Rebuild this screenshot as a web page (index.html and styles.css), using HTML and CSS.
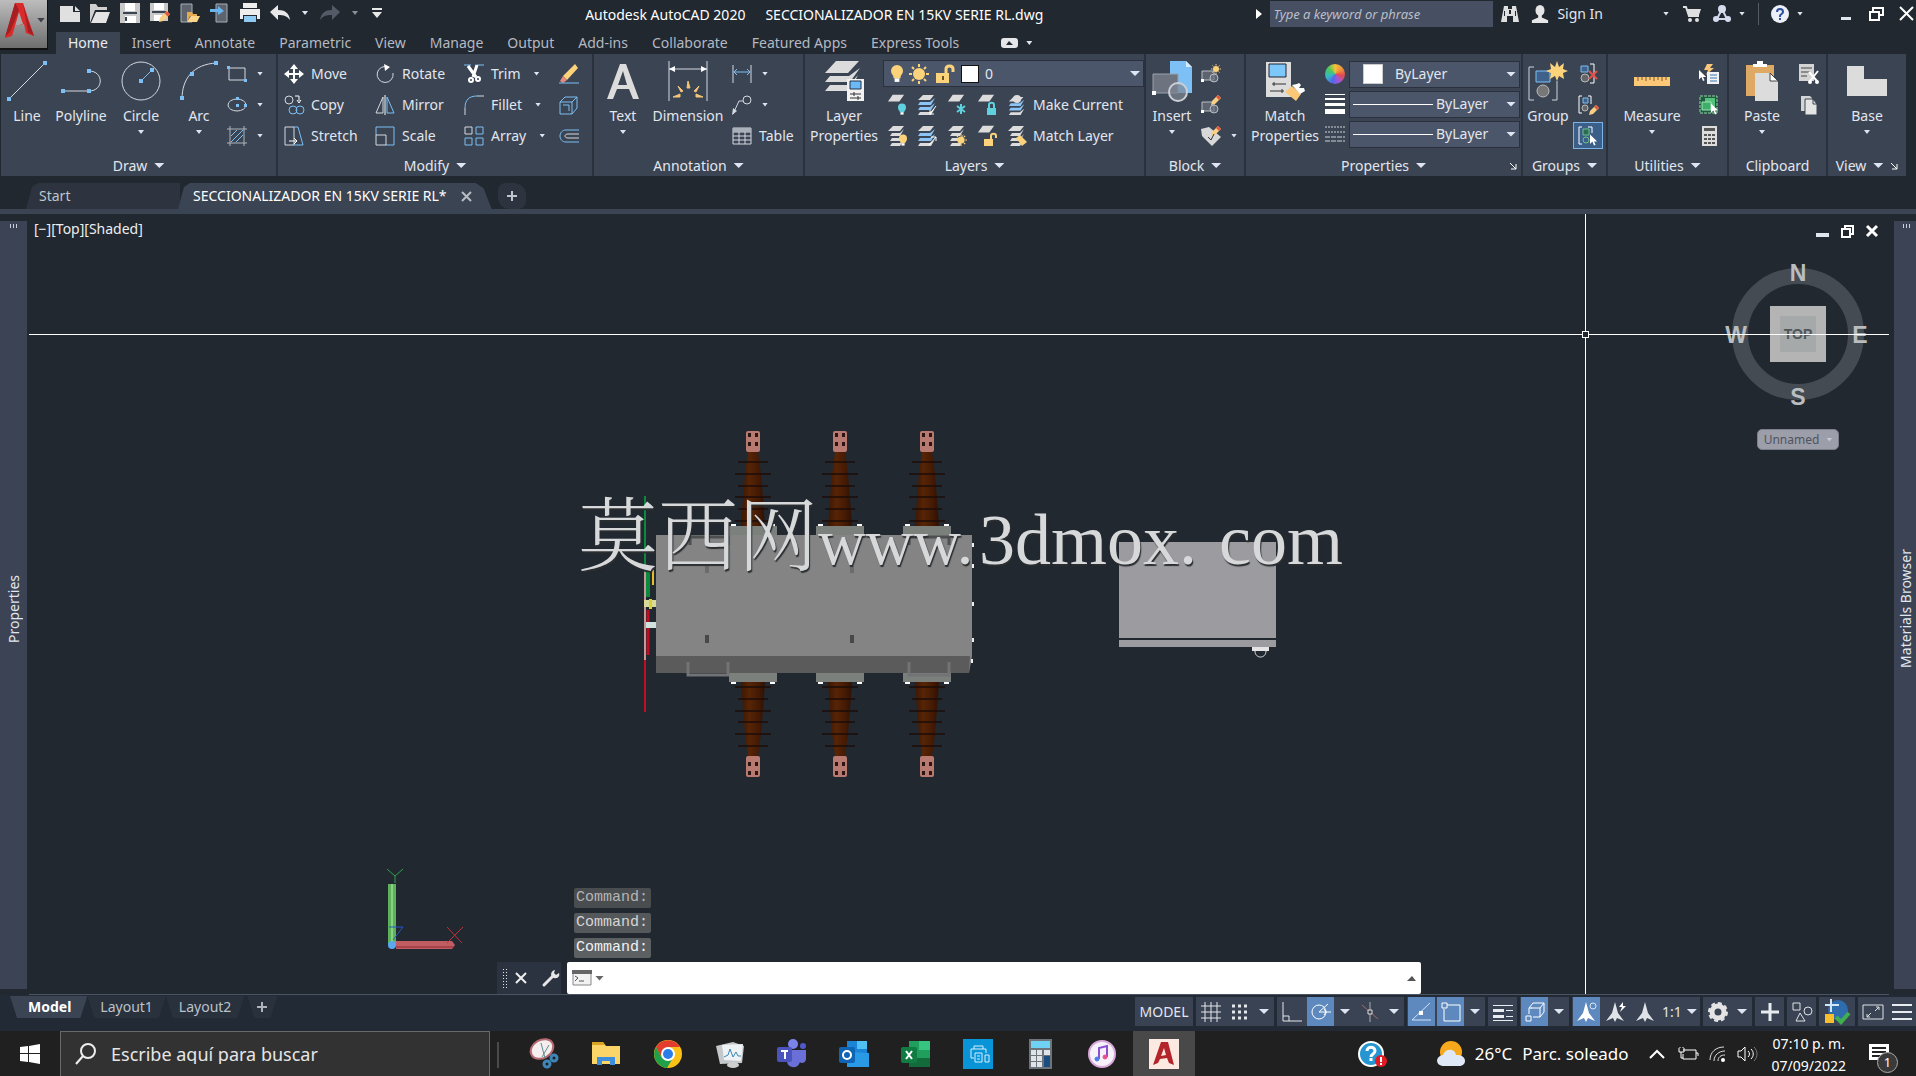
FILE: index.html
```html
<!DOCTYPE html>
<html lang="en">
<head>
<meta charset="utf-8">
<title>Autodesk AutoCAD 2020 - SECCIONALIZADOR EN 15KV SERIE RL.dwg</title>
<link rel="stylesheet" href="styles.css">
</head>
<body>
<svg class="defs" aria-hidden="true">
  <symbol id="sheet" viewBox="0 0 20 20"><path d="M6 3h12l-5 7H1z" fill="#dcdcdc"/></symbol>
  <symbol id="stack" viewBox="0 0 20 20"><path d="M6 0h11l-4 5H1zM3 10l2-3h8l4-4-4 7zM3 15l2-3h8l4-4-4 7zM3 20l2-3h8l4-4-4 7z" fill="#dcdcdc"/></symbol>
  <symbol id="bstack" viewBox="0 0 20 20"><path d="M6 0h11l-4 5H1z" fill="#dcdcdc"/><path d="M1 10l2-3h10l5-4-4 7zM1 15l2-3h10l5-4-4 7z" fill="#8cc4f5"/><path d="M1 20l2-3h10l5-4-4 7z" fill="#dcdcdc"/></symbol>
  <symbol id="bulb" viewBox="0 0 10 14"><circle cx="5" cy="5" r="5"/><path d="M2 8h6v3H2z"/><path d="M3 11h4v3H3z" fill="#fff"/></symbol>
  <symbol id="sun" viewBox="0 0 20 20"><circle cx="10" cy="10" r="6"/><path d="M10 0v3M10 17v3M0 10h3M17 10h3M3 3l2 2M15 15l2 2M17 3l-2 2M5 15l-2 2" stroke="#fcd27a" stroke-width="2"/></symbol>
  <symbol id="cursor" viewBox="0 0 10 14"><path d="M0 0v12l3-3 2 5 2-1-2-4h4z" fill="#fff"/></symbol>
  <symbol id="block" viewBox="0 0 20 20"><path d="M1 7h12v9H1z" fill="#5d6470" stroke="#b9bec6"/><circle cx="13" cy="14" r="4" fill="#6b7280" fill-opacity=".7" stroke="#b9bec6"/><path d="M0 15h3v3H0z" fill="#fff"/></symbol>
  <symbol id="pencil" viewBox="0 0 10 10"><path d="M0 10l1-4 6-6 3 3-6 6z" fill="#f7cf85"/><path d="M5 2l2-2 3 3-2 2z" fill="#e0563f"/></symbol>
  <symbol id="person" viewBox="0 0 20 20"><ellipse cx="10" cy="6" rx="5" ry="6"/><path d="M8 10h4v4l7 3v3H1v-3l7-3z"/></symbol>
</svg>

<header class="top">
  <button class="app-button" aria-label="Application menu">
    <svg width="30" height="36" viewBox="0 0 30 36"><path d="M10 1h8l11 33-8-3-2-9-9 2-3 10-7 2z" fill="#d92b2b"/><path d="M10 1l4 7-9 22-5 5zM18 1l4 15 7 18-6-4z" fill="#a41e22"/><path d="M14 10l4 12-8 2z" fill="#a9a9a9"/></svg>
    <span class="caret dark"></span>
  </button>
  <div class="titlebar">
    <div class="quick">
      <button aria-label="New"><svg class="i" viewBox="0 0 20 20"><path d="M0 3h13v6h7v10H0zM15 3l5 5h-5z" fill="#e0e0e0"/></svg></button>
      <button aria-label="Open"><svg class="i" viewBox="0 0 20 20"><path d="M0 20V1h6l2 3h9v3H5z" fill="#cfcfcf"/><path d="M6 9h14l-4 11H1z" fill="#e4e4e4"/></svg></button>
      <button aria-label="Save"><svg class="i" viewBox="0 0 20 20"><path d="M0 0h20v20H0z" fill="#c9c9c9"/><path d="M5 0h10v8H5zM5 13h11v7H5z" fill="#fff"/><path d="M3 9h14v2H3zM5 14h2v4H5z" fill="#3b4453"/></svg></button>
      <button aria-label="Save as"><svg class="i" viewBox="0 0 20 20"><path d="M0 0h18v18H0z" fill="#c9c9c9"/><path d="M4 0h10v7H4zM4 12h8v6H4z" fill="#fff"/><path d="M2 8h14v2H2z" fill="#3b4453"/><use href="#pencil" x="9" y="8" width="11" height="11"/></svg></button>
      <button aria-label="Open from web"><svg class="i" viewBox="0 0 20 20"><path d="M1 1h11v18H1z" fill="#5d646e" stroke="#a8adb5"/><path d="M7 19V9h5l1 2h4v2H10z" fill="#e5a94e"/><path d="M11 13h9l-3 6H7z" fill="#fcd58a"/></svg></button>
      <button aria-label="Save to web"><svg class="i" viewBox="0 0 20 20"><path d="M6 1h11v18H6z" fill="#5d646e" stroke="#a8adb5"/><path d="M0 6h8V3l6 5-6 4V9H0z" fill="#6bb5ef"/></svg></button>
      <button aria-label="Plot"><svg class="i" viewBox="0 0 20 20"><path d="M3 0h14v5H3zM0 6h20v10h-3v-4H3v4H0z" fill="#eee"/><path d="M4 13h12v6H4z" fill="#8fcaf2"/></svg></button>
      <button aria-label="Undo"><svg class="i" viewBox="0 0 20 20"><path d="M0 9l8-7v5c7 0 11 3 12 10-3-4-6-5-12-5v5z" fill="#e8e8e8"/></svg></button>
      <span class="caret sm"></span>
      <button aria-label="Redo"><svg class="i" viewBox="0 0 20 20"><path d="M20 9l-8-7v5C5 7 1 10 0 17c3-4 6-5 12-5v5z" fill="#545b66"/></svg></button>
      <span class="caret sm dim"></span>
      <button aria-label="Customize toolbar" class="qat-more"><svg width="10" height="10" viewBox="0 0 10 10"><path d="M0 0h10v2H0zM0 4h10l-5 6z" fill="#e8e8e8"/></svg></button>
    </div>
    <h1 class="title"><span>Autodesk AutoCAD 2020</span><span>SECCIONALIZADOR EN 15KV SERIE RL.dwg</span></h1>
    <div class="account">
      <svg width="6" height="10" viewBox="0 0 6 10"><path d="M0 0l6 5-6 5z" fill="#fff"/></svg>
      <input class="keyword" type="text" aria-label="Search" placeholder="Type a keyword or phrase">
      <button aria-label="Find"><svg class="i18" viewBox="0 0 18 18"><path d="M3 1h4v3h4V1h4l3 16h-6v-6H6v6H0z" fill="#e0e0e0"/><path d="M8 5h2v4H8zM3 6h1v5H3zM14 6h1v5h-1z" fill="#212830"/></svg></button>
      <button class="signin"><svg class="i18" fill="#e6e6e6"><use href="#person"/></svg>Sign In</button>
      <span class="caret sm signin-caret"></span>
      <button aria-label="Store"><svg class="i18" viewBox="0 0 18 18"><path d="M0 2h3l3 9h10" fill="none" stroke="#e0e0e0" stroke-width="2"/><path d="M4 4h14l-2 6H6z" fill="#e0e0e0"/><circle cx="7" cy="15" r="2" fill="#e0e0e0"/><circle cx="14" cy="15" r="2" fill="#e0e0e0"/></svg></button>
      <button class="apps" aria-label="Apps"><svg class="i18" viewBox="0 0 18 18"><path d="M9 4L4 14h10z" fill="none" stroke="#cfd6ea" stroke-width="2"/><circle cx="9" cy="4" r="4" fill="#d6dcee"/><circle cx="3" cy="14" r="3" fill="#d6dcee"/><circle cx="15" cy="14" r="3" fill="#d6dcee"/></svg><span class="caret sm"></span></button>
      <i class="divider"></i>
      <button class="apps" aria-label="Help"><svg class="i18" viewBox="0 0 18 18"><circle cx="9" cy="9" r="9" fill="#eceff5"/><path d="M6 7c0-4 6-4 6 0 0 2-3 2-3 4v1m0 1v2" fill="none" stroke="#2a4f9c" stroke-width="2"/></svg><span class="caret sm"></span></button>
      <div class="window">
        <button aria-label="Minimize"><svg class="i15" viewBox="0 0 15 15"><path d="M2 11h10v3H2z" fill="#dfe6ee"/></svg></button>
        <button aria-label="Restore"><svg class="i15" viewBox="0 0 15 15"><path d="M4 6V2h10v7h-4M1 6h9v8H1z" fill="none" stroke="#fff" stroke-width="2"/></svg></button>
        <button aria-label="Close"><svg class="i15" viewBox="0 0 15 15"><path d="M1 1l13 13M14 1L1 14" stroke="#fff" stroke-width="2"/></svg></button>
      </div>
    </div>
  </div>
  <nav class="tabs">
    <button class="on">Home</button><button>Insert</button><button>Annotate</button><button>Parametric</button><button>View</button><button>Manage</button><button>Output</button><button>Add-ins</button><button>Collaborate</button><button>Featured Apps</button><button>Express Tools</button>
    <button class="collapse" aria-label="Minimize ribbon"><svg width="17" height="10" viewBox="0 0 17 10"><rect width="17" height="10" rx="3" fill="#e4e6ea"/><path d="M5 7h7L8 3z" fill="#212830"/></svg><span class="caret sm"></span></button>
  </nav>
</header>

<div class="ribbon">
  <section class="panel draw">
    <div class="body">
      <button class="big w48"><svg class="i40" viewBox="0 0 40 40"><path d="M2 38L38 2" stroke="#d5d9e0"/><path d="M0 36h4v4H0zM36 0h4v4h-4z" fill="#7cc0f5"/></svg>Line</button>
      <button class="big w60"><svg class="i40" viewBox="0 0 40 40"><path d="M2 30h26c15 0 15-20 0-20" fill="none" stroke="#d5d9e0"/><path d="M0 28h4v4H0zM26 28h4v4h-4zM26 8h4v4h-4z" fill="#7cc0f5"/></svg>Polyline</button>
      <button class="big w60"><svg class="i40" viewBox="0 0 40 40"><circle cx="20" cy="20" r="19" fill="none" stroke="#d5d9e0"/><path d="M20 20L31 9" stroke="#7cc0f5"/><path d="M18 18h4v4h-4zM29 7h4v4h-4z" fill="#7cc0f5"/></svg>Circle<span class="caret sm"></span></button>
      <button class="big w56"><svg class="i40" viewBox="0 0 40 40"><path d="M3 38C3 18 14 3 38 2" fill="none" stroke="#d5d9e0"/><path d="M1 35h4v4H1zM11 11h4v4h-4zM35 0h4v4h-4z" fill="#7cc0f5"/></svg>Arc<span class="caret sm"></span></button>
      <div class="rows">
        <button class="small split"><svg class="i" viewBox="0 0 20 20"><path d="M2 4h16v12H2z" fill="none" stroke="#d5d9e0"/><path d="M0 2h3v3H0zM17 15h3v3h-3z" fill="#7cc0f5"/></svg><span class="caret sm"></span></button>
        <button class="small split"><svg class="i" viewBox="0 0 20 20"><ellipse cx="10" cy="10" rx="9" ry="6" fill="none" stroke="#d5d9e0"/><path d="M9 2h3v3H9zM9 9h3v3H9zM17 9h3v3h-3z" fill="#7cc0f5"/></svg><span class="caret sm"></span></button>
        <button class="small split"><svg class="i" viewBox="0 0 20 20"><path d="M0 3h20M0 17h20M3 0v20M17 0v20" stroke="#aeb4be"/><path d="M4 10l6-6M4 16L16 4M9 16l7-7" stroke="#7cc0f5"/></svg><span class="caret sm"></span></button>
      </div>
    </div>
    <button class="name">Draw<span class="caret"></span></button>
  </section>

  <section class="panel modify">
    <div class="body">
      <div class="rows c1">
        <button class="small"><svg class="i" viewBox="0 0 20 20"><path d="M10 0l4 5h-3v4h4V6l5 4-5 4v-3h-4v4h3l-4 5-4-5h3v-4H5v3l-5-4 5-4v3h4V5H6z" fill="#fff"/></svg>Move</button>
        <button class="small"><svg class="i" viewBox="0 0 20 20"><circle cx="5" cy="5" r="4" fill="none" stroke="#d5d9e0"/><path d="M11 1h4v5m-2-1l2 3 2-3" fill="none" stroke="#fff"/><circle cx="9" cy="15" r="4" fill="none" stroke="#7cc0f5"/><circle cx="16" cy="15" r="4" fill="none" stroke="#7cc0f5"/></svg>Copy</button>
        <button class="small"><svg class="i" viewBox="0 0 20 20"><path d="M1 1h9v18H1z" fill="none" stroke="#d5d9e0"/><path d="M10 1h4l5 18h-9" fill="none" stroke="#7cc0f5"/><path d="M5 15h8m-3-3l3 3-3 3" fill="none" stroke="#fff"/></svg>Stretch</button>
      </div>
      <div class="rows c2">
        <button class="small"><svg class="i" viewBox="0 0 20 20"><path d="M13 3a8 8 0 1 0 5 6" fill="none" stroke="#d5d9e0"/><path d="M9 0l6 3-5 4z" fill="#fff"/></svg>Rotate</button>
        <button class="small"><svg class="i" viewBox="0 0 20 20"><path d="M8 2v16H1z" fill="none" stroke="#d5d9e0"/><path d="M12 2v16h7z" fill="none" stroke="#7cc0f5"/><path d="M10 0v20" stroke="#fff"/></svg>Mirror</button>
        <button class="small"><svg class="i" viewBox="0 0 20 20"><path d="M1 9V1h18v18h-8" fill="none" stroke="#7cc0f5"/><path d="M1 9h10v10H1z" fill="none" stroke="#d5d9e0"/></svg>Scale</button>
      </div>
      <div class="rows c3">
        <button class="small"><svg class="i" viewBox="0 0 20 20"><path d="M0 1h7M13 1h7" stroke="#7cc0f5"/><path d="M4 2l8 11M13 1L9 13" stroke="#fff" stroke-width="3"/><circle cx="7" cy="16" r="2" fill="none" stroke="#fff" stroke-width="2"/><circle cx="14" cy="15" r="2" fill="none" stroke="#fff" stroke-width="2"/></svg>Trim<span class="caret sm"></span></button>
        <button class="small"><svg class="i" viewBox="0 0 20 20"><path d="M1 20V13" stroke="#d5d9e0"/><path d="M1 13C1 5 5 1 13 1" fill="none" stroke="#7cc0f5"/><path d="M13 1h7" stroke="#d5d9e0"/></svg>Fillet<span class="caret sm"></span></button>
        <button class="small"><svg class="i" viewBox="0 0 20 20"><path d="M1 1h7v7H1z" fill="none" stroke="#d5d9e0"/><path d="M12 1h7v7h-7zM1 12h7v7H1zM12 12h7v7h-7z" fill="none" stroke="#7cc0f5"/></svg>Array<span class="caret sm"></span></button>
      </div>
      <div class="rows">
        <button class="small" aria-label="Erase"><svg class="i" viewBox="0 0 20 20"><path d="M4 12L16 0l3 4L8 16z" fill="#fcd27a"/><path d="M4 12l4 4-4 3-3-2z" fill="#e58a7e"/><path d="M0 19h20" stroke="#7cc0f5"/></svg></button>
        <button class="small" aria-label="Explode"><svg class="i" viewBox="0 0 20 20"><path d="M1 7h12v12H1zM1 7l5-5h12l-5 5M18 2v11l-5 6M4 10h6v6" fill="none" stroke="#7cc0f5"/></svg></button>
        <button class="small" aria-label="Offset"><svg class="i" viewBox="0 0 20 20"><path d="M20 4H7C-1 4-1 16 7 16h13" fill="none" stroke="#7cc0f5"/><path d="M20 8H9c-4 0-4 4 0 4h11" fill="none" stroke="#d5d9e0"/></svg></button>
      </div>
    </div>
    <button class="name">Modify<span class="caret"></span></button>
  </section>

  <section class="panel annotation">
    <div class="body">
      <button class="big w56"><svg class="i40" viewBox="0 0 40 40"><path d="M4 38L17 3h6l13 35h-6l-4-10H14l-4 10zM15 24h9L20 10z" fill="#dcdcdc"/></svg>Text<span class="caret sm"></span></button>
      <button class="big w74"><svg class="i40" viewBox="0 0 40 40"><path d="M1 0v40M39 0v40M1 8h38" stroke="#d5d9e0"/><path d="M1 8l6-3v6zM39 8l-6-3v6z" fill="#fff"/><path d="M19 27l1-7 2 7zM10 25l5 5-2 1zM31 25l-5 5 2 1zM5 36l7-3v3zM35 36l-7-3v3z" fill="#f3c476" stroke="#f3c476"/></svg>Dimension</button>
      <div class="rows">
        <button class="small split"><svg class="i" viewBox="0 0 20 20"><path d="M1 1v18M19 1v18" stroke="#d5d9e0"/><path d="M2 8h16M5 5L2 8l3 3M15 5l3 3-3 3" fill="none" stroke="#7cc0f5"/></svg><span class="caret sm"></span></button>
        <button class="small split"><svg class="i" viewBox="0 0 20 20"><path d="M1 19L7 6h4" fill="none" stroke="#d5d9e0"/><circle cx="15" cy="5" r="4" fill="none" stroke="#d5d9e0"/><path d="M0 20l1-7 4 3z" fill="#d5d9e0"/></svg><span class="caret sm"></span></button>
        <button class="small"><svg class="i" viewBox="0 0 20 20"><path d="M1 2h18v16H1zM1 10h18M1 14h18M7 6v12M13 6v12M1 6h18" fill="none" stroke="#d5d9e0"/><path d="M1 2h18v4H1z" fill="#aab0b9"/></svg>Table</button>
      </div>
    </div>
    <button class="name">Annotation<span class="caret"></span></button>
  </section>

  <section class="panel layers">
    <div class="body">
      <button class="big w74"><svg class="i40" viewBox="0 0 40 40"><path d="M12 0h23L24 12H1zM1 21l5-6h19L36 7 26 21zM1 30l5-6h19l9-10-8 16z" fill="#dcdcdc"/><path d="M23 18h17v22H23z" fill="#f2f2f2"/><path d="M26 20h11v8H26z" fill="#6bb9f7" stroke="#234"/><path d="M26 33h11M26 37h11M30 31v4M34 35v4" stroke="#333"/></svg>Layer<br>Properties</button>
      <div class="layer-tools">
        <div class="combo layer-combo">
          <svg class="bulb" fill="#fcd27a"><use href="#bulb"/></svg>
          <svg class="i" fill="#fcd27a"><use href="#sun"/></svg>
          <svg class="i" viewBox="0 0 20 20"><path d="M1 9h13v10H1z" fill="#fcd27a"/><path d="M11 9V5c0-4 7-4 7 0v3" fill="none" stroke="#fcd27a" stroke-width="3"/><path d="M7 12h2v4H7z" fill="#6a5320"/></svg>
          <span class="swatch"></span>
          <select aria-label="Layer"><option>0</option></select>
          <span class="caret"></span>
        </div>
        <div class="layer-row">
          <button aria-label="Off"><svg class="i" viewBox="0 0 20 20"><use href="#sheet" width="19" height="19" y="-3"/><use href="#bulb" x="11" y="8" width="8" height="12" fill="#5fd0de"/></svg></button>
          <button aria-label="Isolate"><svg class="i" viewBox="0 0 20 20"><use href="#bstack"/><path d="M19 11l-6 8m0-4v4h4" stroke="#fff" fill="none"/></svg></button>
          <button aria-label="Freeze"><svg class="i" viewBox="0 0 20 20"><use href="#sheet" width="19" height="19" y="-3"/><path d="M14 9v10M10 11l8 6M18 11l-8 6" stroke="#5fd0de" stroke-width="2"/></svg></button>
          <button aria-label="Lock"><svg class="i" viewBox="0 0 20 20"><use href="#sheet" width="19" height="19" y="-3"/><path d="M10 13h9v7h-9z" fill="#5fd0de"/><path d="M12 13v-3c0-3 5-3 5 0v3" fill="none" stroke="#5fd0de" stroke-width="2"/></svg></button>
          <button class="wide"><svg class="i" viewBox="0 0 20 20"><use href="#bstack" y="2" height="18"/><circle cx="10" cy="4" r="4" fill="#dcdcdc"/></svg>Make Current</button>
        </div>
        <div class="layer-row">
          <button aria-label="Turn all on"><svg class="i" viewBox="0 0 20 20"><use href="#stack"/><use href="#bulb" x="12" y="8" width="8" height="12" fill="#fcd27a"/></svg></button>
          <button aria-label="Unisolate"><svg class="i" viewBox="0 0 20 20"><use href="#bstack"/><path d="M12 19l7-8m-5 0h5v4" stroke="#fff" fill="none"/></svg></button>
          <button aria-label="Thaw all"><svg class="i" viewBox="0 0 20 20"><use href="#stack"/><use href="#sun" x="8" y="8" width="12" height="12" fill="#fcd27a"/></svg></button>
          <button aria-label="Unlock"><svg class="i" viewBox="0 0 20 20"><use href="#sheet" width="19" height="19" y="-3"/><path d="M7 13h9v7H7z" fill="#fcd27a"/><path d="M14 13v-3c0-3 5-3 5 0v2" fill="none" stroke="#fcd27a" stroke-width="2"/></svg></button>
          <button class="wide"><svg class="i" viewBox="0 0 20 20"><use href="#stack"/><path d="M9 12l4-3 7 7-5 4z" fill="#fcd27a"/></svg>Match Layer</button>
        </div>
      </div>
    </div>
    <button class="name">Layers<span class="caret"></span></button>
  </section>

  <section class="panel block">
    <div class="body">
      <button class="big w48"><svg class="i40" viewBox="0 0 40 40"><path d="M18 0h16l6 6v26H18z" fill="#7cc0f5"/><path d="M34 0v6h6z" fill="#d7ecfb"/><path d="M1 13h25v19H1z" fill="#6d7480" stroke="#9aa1ab"/><circle cx="26" cy="31" r="9" fill="#7f8894" fill-opacity=".7" stroke="#ccd0d6" stroke-width="2"/><path d="M0 30h4v4H0z" fill="#fff"/></svg>Insert<span class="caret sm"></span></button>
      <div class="rows">
        <button class="small" aria-label="Create block"><svg class="i" viewBox="0 0 20 20"><use href="#block"/><use href="#sun" x="10" y="0" width="10" height="10" fill="#fcd27a"/></svg></button>
        <button class="small" aria-label="Edit block"><svg class="i" viewBox="0 0 20 20"><use href="#block"/><use href="#pencil" x="10" y="0" width="10" height="10"/></svg></button>
        <button class="small split" aria-label="Edit attributes"><svg class="i" viewBox="0 0 20 20"><path d="M0 3l8-2 12 10-9 9L1 10z" fill="#d8d8d8"/><use href="#pencil" x="10" y="0" width="10" height="10"/><path d="M7 11l3 3 3-6" stroke="#333" fill="none"/></svg><span class="caret sm"></span></button>
      </div>
    </div>
    <button class="name">Block<span class="caret"></span></button>
  </section>

  <section class="panel properties">
    <div class="body">
      <button class="big w74"><svg class="i40" viewBox="0 0 40 40"><path d="M1 1h25v35H1z" fill="#dcdcdc"/><path d="M4 3h17v13H4z" fill="#7cc8fb" stroke="#223"/><path d="M7 23h14M5 30h14M9 21v4M17 28v4" stroke="#333" stroke-width="1"/><path d="M20 31l7-6 9 8-5 7z" fill="#fcc878"/><path d="M27 24l5-1 2-1 2 2-2 3 5 0 1 3-5 3z" fill="#fff"/></svg>Match<br>Properties</button>
      <div class="prop-tools">
        <span class="wheel"></span>
        <div class="combo"><span class="swatch big-swatch"></span><select aria-label="Object color"><option>ByLayer</option></select><span class="caret"></span></div>
        <svg class="i" viewBox="0 0 20 20"><path d="M0 0h20v1H0zM0 4h20v2H0zM0 9h20v3H0zM0 15h20v5H0z" fill="#fff"/></svg>
        <div class="combo"><i class="rule"></i><select aria-label="Lineweight"><option>ByLayer</option></select><span class="caret"></span></div>
        <svg class="i" viewBox="0 0 20 20"><path d="M0 3h20M0 8h20" stroke="#cfd3da" stroke-dasharray="2 1"/><path d="M0 13h20M0 17h20" stroke="#cfd3da" stroke-dasharray="5 1"/></svg>
        <div class="combo"><i class="rule"></i><select aria-label="Linetype"><option>ByLayer</option></select><span class="caret"></span></div>
      </div>
    </div>
    <div class="name">Properties<span class="caret"></span><svg class="launch" viewBox="0 0 8 8"><path d="M1 1l6 6M7 2v5H2" fill="none" stroke="#fff"/></svg></div>
  </section>

  <section class="panel groups">
    <div class="body">
      <button class="big w48"><svg class="i40" viewBox="0 0 40 40"><path d="M6 6H1v33h5M24 39h5V20" fill="none" stroke="#cfd3da" stroke-width="1"/><path d="M8 10h14v11H8z" fill="#3f628a" stroke="#7cc0f5"/><circle cx="15" cy="30" r="6" fill="#777" stroke="#bbb"/><path d="M29 0l2 6 5-4-1 6 5 2-5 2 1 6-5-3-2 5-2-5-5 3 1-6-5-2 5-2-1-6 5 4z" fill="#fcd27a"/></svg>Group</button>
      <div class="rows">
        <button class="small tile" aria-label="Ungroup"><svg class="i" viewBox="0 0 20 20"><path d="M3 2h7v6H3z" fill="#3f628a" stroke="#7cc0f5"/><circle cx="7" cy="14" r="4" fill="#666" stroke="#bbb"/><path d="M12 0h4v19h-4" fill="none" stroke="#fff"/><path d="M11 7l8 8M19 7l-8 8" stroke="#e2504a" stroke-width="2"/></svg></button>
        <button class="small tile" aria-label="Group edit"><svg class="i" viewBox="0 0 20 20"><path d="M4 1H1v17h3M10 1h3v8" fill="none" stroke="#fff"/><path d="M5 3h5v5H5z" fill="#3f628a" stroke="#7cc0f5"/><circle cx="7" cy="13" r="3" fill="#666" stroke="#bbb"/><use href="#pencil" x="11" y="10" width="10" height="10"/></svg></button>
        <button class="small tile active" aria-label="Group selection"><svg class="i" viewBox="0 0 20 20"><path d="M4 1H1v17h3M10 1h4v6" fill="none" stroke="#fff"/><path d="M5 3h6v6H5z" fill="#2f6a55" stroke="#6fc08a"/><circle cx="8" cy="14" r="3" fill="none" stroke="#6fc08a"/><use href="#cursor" x="12" y="8" width="8" height="12"/></svg></button>
      </div>
    </div>
    <button class="name">Groups<span class="caret"></span></button>
  </section>

  <section class="panel utilities">
    <div class="body">
      <button class="big w74"><svg class="i40" viewBox="0 0 40 40"><path d="M2 16h36v9H2z" fill="#fcc878"/><path d="M6 16v4M10 16v3M14 16v4M18 16v3M22 16v4M26 16v3M30 16v4M34 16v3" stroke="#7d5a20"/></svg>Measure<span class="caret sm"></span></button>
      <div class="rows">
        <button class="small" aria-label="Quick select"><svg class="i" viewBox="0 0 20 20"><path d="M8 0l-3 6h4l-2 5 8-7h-4l3-4z" fill="#fcc878"/><path d="M8 8h12v12H8z" fill="#f2f2f2"/><path d="M11 11h7M11 14h7M11 17h7" stroke="#3b78b8"/><use href="#cursor" x="0" y="5" width="8" height="13"/></svg></button>
        <button class="small" aria-label="Select all"><svg class="i" viewBox="0 0 20 20"><path d="M1 1h17v17H1z" fill="#21583f" stroke="#8fd6a4" stroke-dasharray="3 1"/><path d="M6 3h10v9H6z" fill="#53c27a"/><path d="M3 7h9v8H3z" fill="#3fae68" stroke="#9ce6b4"/><use href="#cursor" x="12" y="8" width="8" height="12"/></svg></button>
        <button class="small" aria-label="Calculator"><svg class="i" viewBox="0 0 20 20"><path d="M3 0h15v20H3z" fill="#dcdcdc"/><path d="M5 2h11v3H5z" fill="#555"/><path d="M5 8h3v2H5zM9 8h3v2H9zM13 8h3v2h-3zM5 12h3v2H5zM9 12h3v2H9zM13 12h3v2h-3zM5 16h3v2H5zM9 16h3v2H9zM13 16h3v2h-3z" fill="#555"/></svg></button>
      </div>
    </div>
    <button class="name">Utilities<span class="caret"></span></button>
  </section>

  <section class="panel clipboard">
    <div class="body">
      <button class="big w56"><svg class="i40" viewBox="0 0 40 40"><path d="M4 4h28v31H4z" fill="#dea964"/><path d="M11 3h4V0h6v3h4v3H11z" fill="#fff"/><path d="M13 12h15l8 8v20H13z" fill="#dcdcdc"/><path d="M28 12v8h8z" fill="#fff" stroke="#444"/></svg>Paste<span class="caret sm"></span></button>
      <div class="rows">
        <button class="small" aria-label="Cut"><svg class="i" viewBox="0 0 20 20"><path d="M0 0h15v17H0z" fill="#d4d4d4"/><path d="M2 4h11M2 8h9M2 12h6" stroke="#444"/><path d="M10 8l8 9M19 7l-8 10" stroke="#fff" stroke-width="2"/><circle cx="11" cy="18" r="2" fill="#fff"/><circle cx="18" cy="18" r="2" fill="#fff"/></svg></button>
        <button class="small" aria-label="Copy"><svg class="i" viewBox="0 0 20 20"><path d="M2 1h9l2 2v13H2z" fill="#d4d4d4"/><path d="M6 4h8l4 5v11H6z" fill="#e4e4e4" stroke="#3b4453"/><path d="M14 4v5h4" fill="none" stroke="#3b4453"/></svg></button>
      </div>
    </div>
    <div class="name">Clipboard</div>
  </section>

  <section class="panel view">
    <div class="body">
      <button class="big w74"><svg class="i40" viewBox="0 0 40 40"><path d="M0 5h17v13h23v17H0z" fill="#dcdcdc"/></svg>Base<span class="caret sm"></span></button>
    </div>
    <div class="name">View<span class="caret"></span><svg class="launch" viewBox="0 0 8 8"><path d="M1 1l6 6M7 2v5H2" fill="none" stroke="#fff"/></svg></div>
  </section>
</div>

<nav class="files">
  <button class="file start">Start</button>
  <button class="file current">SECCIONALIZADOR EN 15KV SERIE RL*<svg width="11" height="11" viewBox="0 0 11 11"><path d="M1 1l9 9M10 1l-9 9" stroke="#b8bcc4" stroke-width="2"/></svg></button>
  <button class="file add" aria-label="New drawing"><svg width="10" height="10" viewBox="0 0 10 10"><path d="M5 0v10M0 5h10" stroke="#c0c4cc" stroke-width="2"/></svg></button>
</nav>

<main class="work">
  <aside class="palette left"><i class="grip"></i><span>Properties</span></aside>
  <div class="canvas">
    <div class="view-label">[−][Top][Shaded]</div>
    <svg class="model" width="680" height="370" viewBox="620 420 680 370">
      <defs>
        <linearGradient id="rust"><stop offset="0" stop-color="#3c1704"/><stop offset=".35" stop-color="#572405"/><stop offset=".7" stop-color="#461b04"/><stop offset="1" stop-color="#2e1105"/></linearGradient>
        <g id="bushing">
          <path d="M-5 452H5L8 474L10 498L12 526H-12L-10 498L-8 474z" fill="url(#rust)"/>
          <path d="M-15 462H15M-18 474H18M-15 486H15M-18 497H18M-15 509H15M-18 521H18" stroke="#1c0d09" stroke-width="1.5"/>
          <rect x="-7" y="431" width="14" height="21" rx="2" fill="#b87a70"/>
          <path d="M-5 433h3v4h-3zM2 433h3v4H2zM-5 442h3v4h-3zM2 442h3v4H2z" fill="#2b1512"/>
          <path d="M-24 526h48v10h-48z" fill="#7c807d"/>
          <path d="M-22 524h5v2h-5zM17 524h5v2h-5z" fill="#fff"/>
        </g>
      </defs>
      <use href="#bushing" x="753"/><use href="#bushing" x="840"/><use href="#bushing" x="927"/>
      <g transform="matrix(1 0 0 -1 0 1208)"><use href="#bushing" x="753"/><use href="#bushing" x="840"/><use href="#bushing" x="927"/></g>
      <path d="M656 535h316v121l-3 17H656z" fill="#838483"/>
      <path d="M656 656h314l-1 17H656z" fill="#5b5b5b"/>
      <path d="M690 545v-8h38v8M909 545v-8h40v8" fill="none" stroke="#4d4f50" stroke-width="3"/>
      <path d="M688 662v13h40v-13" fill="none" stroke="#727374" stroke-width="3"/><path d="M909 662v13h40v-13" fill="none" stroke="#727374" stroke-width="3"/>
      <path d="M705 566h4v7h-4zM850 566h4v7h-4z" fill="#6b6c6b"/><path d="M705 635h4v8h-4zM850 635h4v8h-4z" fill="#474847"/>
      <path d="M972 543h2v4h-2zM972 564h2v4h-2zM972 602h2v4h-2zM972 638h2v4h-2zM971 659h2v4h-2z" fill="#eee"/>
      <path d="M645 496v76" stroke="#0b8a3e" stroke-width="2"/><path d="M645 572v88" stroke="#c49a9a" stroke-width="2"/><path d="M645 660v52" stroke="#c00d22" stroke-width="2"/>
      <path d="M648 572v25" stroke="#0b8a3e" stroke-width="4"/><path d="M648 610v45" stroke="#c00d22" stroke-width="3"/><path d="M648 570h5v15" fill="none" stroke="#e5c02c" stroke-width="2"/>
      <path d="M644 600h12v7h-12z" fill="#d9d99a"/><path d="M646 622h10v6h-10z" fill="#cfe2dd"/><path d="M649 599h3v10h-3z" fill="#d8cf3c"/>
      <path d="M1119 542h157v96h-157zM1119 640h157v7h-157z" fill="#9c9b9f"/>
      <path d="M1252 647h17v4h-17z" fill="#e4e4e4"/><path d="M1255 651c0 8 11 8 11 0" fill="none" stroke="#e4e4e4" stroke-width="1"/>
    </svg>
    <p class="watermark"><span class="han">莫西网</span><span class="www">www.</span><span class="host">3dmox.</span><span class="com">com</span></p>
    <svg class="ucs" width="90" height="96" viewBox="380 862 90 96">
      <path d="M388 884h8v60h-8z" fill="#5cb15a"/><path d="M391 884h2v60h-2z" fill="#8ad283"/><path d="M396 941h56l3 4-3 4h-56z" fill="#c05c62"/><path d="M396 946h57v2h-57z" fill="#a8444c"/>
      <path d="M387 869l8 7 8-7M395 876v7" fill="none" stroke="#2fa04b"/><path d="M447 927l15 16M463 927l-16 16" stroke="#c2303c"/><path d="M389 927h14l-10 13" fill="none" stroke="#2456c8"/><circle cx="392" cy="945" r="4" fill="#5aa9f0"/>
    </svg>
    <svg class="cube" width="140" height="140" viewBox="0 0 140 140" font-family="Liberation Sans, sans-serif" font-weight="bold" text-anchor="middle">
      <circle cx="70" cy="70" r="58" fill="none" stroke="#444b53" stroke-width="16"/>
      <path d="M42 42h56v56H42z" fill="#b4b4b4"/><path d="M52 52h36v36H52z" fill="#a6a9aa"/>
      <text x="70" y="75" font-size="14" fill="#50565b">TOP</text>
      <g font-size="23" fill="#b9bdc0"><text x="70" y="17">N</text><text x="70" y="141">S</text><text x="8" y="79">W</text><text x="132" y="79">E</text></g>
    </svg>
    <button class="ucs-name">Unnamed<span class="caret sm"></span></button>
    <div class="view-controls">
      <button aria-label="Minimize view"><svg class="i13" viewBox="0 0 13 13"><path d="M0 8h13v4H0z" fill="#dfe6ee"/></svg></button>
      <button aria-label="Restore view"><svg class="i13" viewBox="0 0 13 13"><path d="M4 3V1h8v8h-2M1 4h8v8H1z" fill="none" stroke="#fff" stroke-width="2"/></svg></button>
      <button aria-label="Close view"><svg class="i13" viewBox="0 0 13 13"><path d="M1 1l10 10M11 1L1 11" stroke="#fff" stroke-width="3"/></svg></button>
    </div>
    <i class="cross-h"></i><i class="cross-v"></i><i class="pick"></i>
    <div class="history"><span>Command:</span><span>Command:</span><span>Command:</span></div>
    <div class="command">
      <div class="command-tools">
        <i class="dots"></i>
        <button aria-label="Close command line"><svg width="12" height="12" viewBox="0 0 12 12"><path d="M1 1l10 10M11 1L1 11" stroke="#eee" stroke-width="2"/></svg></button>
        <button aria-label="Customize"><svg width="18" height="18" viewBox="0 0 18 18"><path d="M2 16L11 7" stroke="#e6e6e6" stroke-width="3" stroke-linecap="round"/><path d="M13 1c-5 1-5 7-1 8s6-2 5-5l-3 2-2-2z" fill="#e6e6e6"/></svg></button>
      </div>
      <div class="command-line">
        <svg width="20" height="16" viewBox="0 0 20 16"><path d="M1 1h18v14H1z" fill="#f2f2f2" stroke="#888"/><path d="M0 0h20v4H0z" fill="#666"/><path d="M3 6l3 2-3 3M7 11h5" fill="none" stroke="#555"/></svg>
        <span class="caret grey"></span>
        <input type="text" aria-label="Command">
        <svg width="9" height="5" viewBox="0 0 9 5"><path d="M0 5h9L5 0z" fill="#555"/></svg>
      </div>
    </div>
  </div>
  <aside class="palette right"><i class="grip"></i><span>Materials Browser</span></aside>
</main>

<footer class="status">
  <nav class="layouts">
    <button class="on">Model</button><button>Layout1</button><button>Layout2</button><button class="plus" aria-label="New layout"><svg width="10" height="10" viewBox="0 0 10 10"><path d="M5 0v10M0 5h10" stroke="#aeb3bc" stroke-width="2"/></svg></button>
  </nav>
  <div class="modes">
    <div class="group"><button class="model-btn">MODEL</button></div>
    <div class="group">
      <button aria-label="Grid"><svg class="i" viewBox="0 0 20 20"><path d="M4 0v20M10 0v20M16 0v20M0 4h20M0 10h20M0 16h20" stroke="#e4e7ec"/></svg></button>
      <button aria-label="Snap"><svg class="i" viewBox="0 0 20 20"><path d="M2 4h16M2 10h16M2 16h16" stroke="#e4e7ec" stroke-width="3" stroke-dasharray="3 3"/></svg></button>
      <button class="drop" aria-label="Snap options"><span class="caret"></span></button>
    </div>
    <div class="group">
      <button aria-label="Ortho"><svg class="i" viewBox="0 0 20 20"><path d="M1 0v19h19M1 14h6v5" fill="none" stroke="#e4e7ec"/></svg></button>
      <button class="on" aria-label="Polar tracking"><svg class="i" viewBox="0 0 20 20"><circle cx="8" cy="10" r="7" fill="none" stroke="#fff"/><path d="M8 10h12M8 10l9-8M13 7l2 3-2 3" fill="none" stroke="#fff"/></svg></button>
      <button class="drop" aria-label="Polar options"><span class="caret"></span></button>
      <button aria-label="Isodraft"><svg class="i" viewBox="0 0 20 20"><path d="M10 0v20" stroke="#a5b1a8"/><path d="M2 3l16 14" stroke="#a36b6b"/><path d="M8 8h4v4H8z" fill="#3a4353" stroke="#ddd"/></svg></button>
      <button class="drop" aria-label="Isodraft options"><span class="caret"></span></button>
    </div>
    <div class="group">
      <button class="on" aria-label="Object snap tracking"><svg class="i" viewBox="0 0 20 20"><path d="M0 18L18 1M0 18h19" stroke="#cfe2f8"/><path d="M7 9h4v4H7z" fill="#fff"/></svg></button>
      <button class="on" aria-label="Object snap"><svg class="i" viewBox="0 0 20 20"><path d="M6 3h13v16H3V7" fill="none" stroke="#fff"/><path d="M1 1h5v5H1z" fill="none" stroke="#fff"/></svg></button>
      <button class="drop" aria-label="Snap list"><span class="caret"></span></button>
    </div>
    <div class="group"><button aria-label="Lineweight"><svg class="i" viewBox="0 0 20 20"><path d="M0 3h20v1H0zM0 7h11v3H0zM13 8h7v1h-7zM0 13h11v3H0zM13 14h7v1h-7zM0 18h20v1H0z" fill="#e8ebf0"/></svg></button></div>
    <div class="group">
      <button class="on" aria-label="3D object snap"><svg class="i" viewBox="0 0 20 20"><path d="M6 6h9v9H8M4 12V6l4-5h11v9l-4 5M15 6l4-5M4 6h3" fill="none" stroke="#fff"/><path d="M1 14h5v5H1z" fill="none" stroke="#fff"/></svg></button>
      <button class="drop" aria-label="3D snap list"><span class="caret"></span></button>
    </div>
    <div class="group">
      <button class="on" aria-label="Annotation visibility"><svg class="i" viewBox="0 0 20 20"><path d="M9 0l3 11 6 8-7-3-2 4-2-4-7 3 6-8z" fill="#fff"/><circle cx="16" cy="4" r="3" fill="none" stroke="#d6e6f8"/></svg></button>
      <button aria-label="Auto scale"><svg class="i" viewBox="0 0 20 20"><path d="M9 0l3 11 6 8-7-3-2 4-2-4-7 3 6-8z" fill="#dfe2e7"/><path d="M17 0l-4 5h3l-2 5 6-6h-3z" fill="#fff"/></svg></button>
      <button aria-label="Annotation scale"><svg class="i" viewBox="0 0 20 20"><path d="M10 0l3 11 6 8-7-3-2 4-2-4-7 3 6-8z" fill="#dfe2e7"/></svg></button>
      <button class="scale">1:1<span class="caret"></span></button>
    </div>
    <div class="group">
      <button aria-label="Workspace"><svg class="i" viewBox="0 0 20 20"><circle cx="10" cy="10" r="6" fill="none" stroke="#e4e4e4" stroke-width="5"/><circle cx="10" cy="10" r="9" fill="none" stroke="#e4e4e4" stroke-width="2" stroke-dasharray="4 3"/></svg></button>
      <button class="drop" aria-label="Workspace list"><span class="caret"></span></button>
    </div>
    <div class="group"><button aria-label="Annotation monitor"><svg class="i" viewBox="0 0 20 20"><path d="M10 1v18M1 10h18" stroke="#e8ebf0" stroke-width="3"/></svg></button></div>
    <div class="group"><button aria-label="Isolate objects"><svg class="i" viewBox="0 0 20 20"><path d="M1 1h7v7H1z" fill="none" stroke="#dfe2e7"/><circle cx="16" cy="9" r="4" fill="none" stroke="#dfe2e7"/><path d="M4 19h9l-5-8z" fill="none" stroke="#dfe2e7"/></svg></button></div>
    <div class="group"><button class="perf" aria-label="Hardware acceleration"><svg width="26" height="26" viewBox="0 0 26 26"><circle cx="14" cy="11" r="10" fill="#2f6cae"/><path d="M1 15h9v9H1z" fill="#f7bf2c"/><path d="M7 0v13M1 6h14" stroke="#cfe6fb" stroke-width="2"/><path d="M12 18l5 5 8-9" fill="none" stroke="#3fae4e" stroke-width="4"/></svg></button></div>
    <div class="group"><button aria-label="Clean screen"><svg class="i" viewBox="0 0 20 20"><path d="M0 3h20v14H0z" fill="none" stroke="#dfe2e7"/><path d="M12 9l4-4M13 5h3v3M8 11l-4 4M4 12v3h3" fill="none" stroke="#dfe2e7"/></svg></button><button aria-label="Customization"><svg class="i" viewBox="0 0 20 20"><path d="M0 3h20M0 10h20M0 17h20" stroke="#e8ebf0" stroke-width="2"/></svg></button></div>
  </div>
</footer>

<div class="taskbar">
  <button class="win" aria-label="Start menu"><svg class="i" viewBox="0 0 20 20"><path d="M0 3l8-1v7H0zM9 2l11-2v9H9zM0 10h8v8l-8-1zM9 10h11v10L9 18z" fill="#fff"/></svg></button>
  <label class="find"><svg width="22" height="22" viewBox="0 0 22 22"><circle cx="13" cy="8" r="7" fill="none" stroke="#eee" stroke-width="2"/><path d="M8 13l-7 8" stroke="#eee" stroke-width="2"/></svg><input type="text" aria-label="Buscar" placeholder="Escribe aquí para buscar"></label>
  <i class="task-divider"></i>
  <div class="apps-row">
    <button aria-label="Snipping Tool"><svg class="i30" viewBox="0 0 30 30"><ellipse cx="13" cy="10" rx="12" ry="9" transform="rotate(-30 13 10)" fill="#f5eeee" stroke="#b56a72" stroke-width="2"/><path d="M12 4l4 15M20 6l-7 12" stroke="#5d8c92"/><circle cx="25" cy="19" r="3" fill="none" stroke="#3f86b8" stroke-width="3"/><circle cx="18" cy="25" r="3" fill="none" stroke="#3f86b8" stroke-width="3"/></svg></button>
    <button aria-label="File Explorer"><svg class="i30" viewBox="0 0 30 30"><path d="M1 3h11l3 4h14v18H1z" fill="#fbd568"/><path d="M1 3h11l2 3H1z" fill="#d9a520"/><path d="M6 26v-8h18v8h-5v-4h-8v4z" fill="#3e8ede"/></svg></button>
    <button aria-label="Chrome"><svg class="i30" viewBox="0 0 30 30"><circle cx="15" cy="15" r="14" fill="#fbc116"/><path d="M3 8a14 14 0 0 1 24 0H15l-6 11z" fill="#e33b2e"/><path d="M3 8a14 14 0 0 0 11 21l6-10-11 0z" fill="#21a04a"/><circle cx="15" cy="15" r="7" fill="#fff"/><circle cx="15" cy="15" r="5" fill="#2b7de9"/></svg></button>
    <button aria-label="Monitor"><svg class="i30" viewBox="0 0 30 30"><path d="M1 7l17-4 11 4-2 17-22 1z" fill="#c4c8cb"/><path d="M7 6l21-1-2 17-17-1z" fill="#eef2f4"/><path d="M9 18l4-2 2-6 3 8 3-5 2 4h3" fill="none" stroke="#3b87b5"/><ellipse cx="18" cy="26" rx="6" ry="3" fill="#cfcfcf"/></svg></button>
    <button aria-label="Teams"><svg class="i30" viewBox="0 0 30 30"><circle cx="16" cy="5" r="5" fill="#7b83eb"/><circle cx="26" cy="7" r="3" fill="#5059c9"/><path d="M10 11h19v9c0 4-5 5-6 3-2 8-13 6-13-1z" fill="#6a70d8"/><rect y="8" width="15" height="15" rx="2" fill="#4b53bc"/><path d="M4 12h7M8 12v8" stroke="#fff" stroke-width="2"/></svg></button>
    <button aria-label="Outlook"><svg class="i30" viewBox="0 0 30 30"><path d="M8 2h20v13H8z" fill="#1c84d6"/><path d="M18 2h10v8H18z" fill="#4fc0f2"/><path d="M8 13l22 1v14H8z" fill="#2b9ae6"/><rect y="8" width="16" height="16" rx="2" fill="#0f64b4"/><circle cx="8" cy="16" r="4" fill="none" stroke="#fff" stroke-width="2"/></svg></button>
    <button aria-label="Excel"><svg class="i30" viewBox="0 0 30 30"><path d="M8 2h21v26H8z" fill="#1f9e5c"/><path d="M18 2h11v9H18z" fill="#37c481"/><path d="M8 19h21v9H8z" fill="#136a3b"/><rect y="8" width="16" height="16" rx="2" fill="#107c41"/><path d="M5 12l6 8M11 12l-6 8" stroke="#fff" stroke-width="2"/></svg></button>
    <button aria-label="Print service"><svg class="i30" viewBox="0 0 30 30"><path d="M0 0h30v30H0z" fill="#0a94d8"/><path d="M8 10h15v4M8 10v9h3M11 10V7h9v3M12 14h7v9h-7zM14 17h3M14 20h3M22 16h4v7h-4z" fill="none" stroke="#d8f0fb"/></svg></button>
    <button aria-label="Calculator"><svg class="i30" viewBox="0 0 30 30"><path d="M4 0h23v30H4z" fill="#6d747b"/><path d="M6 2h19v7H6z" fill="#6fd2f5"/><path d="M6 11h5v5H6zM12 11h5v5h-5zM19 11h6v5h-6zM6 17h5v5H6zM12 17h5v5h-5zM6 23h5v5H6zM12 23h5v5h-5z" fill="#dfe4e8"/><path d="M19 17h6v11h-6z" fill="#1b4e80"/></svg></button>
    <button aria-label="iTunes"><svg class="i30" viewBox="0 0 30 30"><circle cx="15" cy="15" r="13" fill="#f7f2fa" stroke="#d9a9dc" stroke-width="2"/><path d="M12 20V9l8-2v11" fill="none" stroke="#8a50d0" stroke-width="2"/><circle cx="10" cy="20" r="2" fill="#4d7de8" stroke="#4d7de8"/><circle cx="18" cy="18" r="2" fill="#e8518e" stroke="#e8518e"/></svg></button>
    <button class="on" aria-label="AutoCAD"><svg class="i30" viewBox="0 0 30 30"><path d="M0 0h30v30H0z" fill="#fbe9e2"/><path d="M12 3h7l6 23-5-2-2-5-7 1-2 4-5 2z" fill="#b3252b"/><path d="M15 9l2 7-5 1z" fill="#fbe9e2"/></svg></button>
  </div>
  <div class="tray">
    <button class="alert" aria-label="Help"><svg width="30" height="28" viewBox="0 0 30 28"><circle cx="14" cy="14" r="12" fill="#2596d1" stroke="#fff" stroke-width="2"/><path d="M10 11c0-5 8-5 8 0 0 3-4 3-4 6m0 1v3" fill="none" stroke="#fff" stroke-width="3"/><circle cx="24" cy="21" r="6" fill="#e01b24"/><path d="M24 17v5m0 1v2" stroke="#fff" stroke-width="2"/></svg></button>
    <button class="weather"><svg width="28" height="26" viewBox="0 0 28 26"><circle cx="14" cy="11" r="11" fill="#f8a91b"/><path d="M7 25c-9 0-9-10-1-11 2-7 12-7 13 0 11-1 12 11 3 11z" fill="#dfe8f6"/></svg><span>26°C</span><span>Parc. soleado</span></button>
    <div class="tray-icons">
      <svg width="16" height="10" viewBox="0 0 16 10"><path d="M1 9l7-7 7 7" fill="none" stroke="#fff" stroke-width="2"/></svg>
      <svg width="20" height="14" viewBox="0 0 20 14"><path d="M5 3h13v9H5V7M18 6h2v3M1 1v4h5V1M3 5v6h2M2 0v1M5 0v1" fill="none" stroke="#fff"/></svg>
      <svg width="17" height="16" viewBox="0 0 17 16"><path d="M1 14C1 6 7 1 15 1M5 15c0-6 5-10 11-10M9 15c0-4 3-6 7-6" fill="none" stroke="#ddd" stroke-width="1"/><circle cx="14" cy="14" r="2" fill="#fff"/></svg>
      <svg width="20" height="16" viewBox="0 0 20 16"><path d="M1 5h3l4-4v14l-4-4H1zM11 5c2 2 2 4 0 6M14 3c3 3 3 7 0 10" fill="none" stroke="#fff"/><path d="M17 1c4 4 4 10 0 14" fill="none" stroke="#777"/></svg>
    </div>
    <div class="clock"><span>07:10 p. m.</span><span>07/09/2022</span></div>
    <button class="notice" aria-label="Notifications"><svg width="20" height="20" viewBox="0 0 20 20"><path d="M0 0h20v16h-5v4l-4-4H0z" fill="#fff"/><path d="M3 4h14M3 8h14M3 12h8" stroke="#222" stroke-width="2"/></svg><span class="badge">1</span></button>
  </div>
</div>
</body>
</html>
```
FILE: styles.css
```css
* { box-sizing: border-box; }
body {
  margin: 0;
  min-height: 100vh;
  display: flex;
  flex-direction: column;
  background: #212830;
  color: #e2e6ee;
  font: 14px/20px "Noto Sans", "Open Sans", sans-serif;
  overflow: hidden;
}
button, input, select {
  font: inherit;
  color: inherit;
  background: none;
  border: 0;
  padding: 0;
  margin: 0;
  outline: 0;
  white-space: nowrap;
}
button { display: flex; align-items: center; justify-content: center; }
svg { display: block; flex: none; overflow: visible; }
.defs { position: absolute; width: 0; height: 0; overflow: hidden; }
.i { width: 20px; height: 20px; }
.i13 { width: 13px; height: 13px; }
.i15 { width: 15px; height: 15px; }
.i18 { width: 18px; height: 18px; }
.i30 { width: 30px; height: 30px; }
.i40 { width: 40px; height: 40px; }
.caret {
  flex: none;
  width: 10px;
  height: 5px;
  background: #dfe5f2;
  clip-path: polygon(0 0, 100% 0, 50% 100%);
}
.caret.sm { width: 6px; height: 4px; }
.caret.dim { background: #8a9099; }
.caret.dark { width: 8px; background: #3c4046; }
.caret.grey { width: 9px; background: #666; }

/* title bar and ribbon tabs */
.top { display: grid; grid-template: 32px 22px / 48px 1fr; }
.app-button {
  grid-row: 1 / 3;
  height: 50px;
  padding: 0 2px 8px 5px;
  justify-content: space-between;
  background: linear-gradient(#bdbdbd, #6e6e6e);
  border-right: 1px solid #111;
  border-bottom: 2px solid #111;
}
.titlebar { display: flex; justify-content: space-between; align-items: flex-start; }
.quick { display: flex; align-items: center; height: 26px; padding-left: 12px; gap: 10px; }
.quick .caret { margin: 0 2px; }
.qat-more { margin-left: 2px; }
.title { display: flex; gap: 20px; margin: 0 10px 0 0; font-size: 14px; line-height: 30px; font-weight: 400; color: #fff; }
.account { display: flex; align-items: center; height: 27px; }
.keyword { width: 223px; height: 26px; margin: 0 8px; padding: 0 3px; background: #474f62; font-size: 13px; }
.keyword::placeholder { color: #b9bfcb; opacity: 1; font-style: italic; }
.signin { gap: 8px; margin-left: 12px; }
.signin-caret { margin: 0 14px 0 60px; }
.apps { margin-left: 12px; gap: 8px; }
.divider { width: 1px; height: 22px; margin-left: 13px; background: #555c66; }
.window { display: flex; gap: 15px; margin: 0 2px 0 36px; }
.tabs { display: flex; padding-left: 8px; color: #b4b9c2; }
.tabs button { padding: 0 12px; height: 22px; }
.tabs .on { background: #3b4453; color: #e8ebf0; }
.tabs .collapse { padding-left: 30px; gap: 8px; }

/* ribbon */
.ribbon { display: flex; padding-left: 1px; }
.panel { flex: none; display: flex; flex-direction: column; background: #3b4453; border-right: 2px solid #2a313c; }
.draw { width: 277px; }
.modify { width: 316px; }
.annotation { width: 211px; }
.layers { width: 341px; }
.block { width: 100px; }
.properties { width: 277px; }
.groups { width: 85px; }
.utilities { width: 121px; }
.clipboard { width: 99px; }
.view { width: 78px; border: 0; }
.body { display: flex; height: 97px; padding-top: 4px; }
.name { position: relative; display: flex; justify-content: center; align-items: center; gap: 7px; height: 25px; padding-top: 4px; }
.launch { width: 8px; height: 8px; }
.properties .launch { position: absolute; right: 4px; }
.big { flex: none; flex-direction: column; justify-content: flex-start; padding-top: 3px; }
.big svg { margin-bottom: 5px; }
.big .caret { margin-top: 4px; }
.w48 { width: 48px; }
.w56 { width: 56px; }
.w60 { width: 60px; }
.w74 { width: 74px; }
.rows { display: grid; grid-template-rows: repeat(3, 31px); justify-items: start; }
.small { gap: 7px; }
.split { gap: 10px; }
.draw .body { padding-left: 2px; }
.modify .body { padding-left: 6px; }
.c1 { width: 91px; }
.c2 { width: 89px; }
.c3 { width: 95px; }
.c3 .caret { margin-left: 6px; }
.annotation .body { padding-left: 1px; }
.annotation .rows { padding-left: 7px; }
.layers .body { padding-left: 2px; gap: 2px; }
.layer-tools { flex: 1; display: grid; grid-template-rows: repeat(3, 31px); align-items: center; }
.combo { display: flex; align-items: center; height: 27px; padding-right: 3px; background: #4b566b; border: 1px solid #2a313c; }
.combo select { flex: 1; appearance: none; }
.layer-combo { padding-left: 7px; gap: 6px; }
.bulb { width: 12px; height: 17px; }
.swatch { width: 18px; height: 18px; background: #fff; border: 1px solid #111; }
.layer-row { display: flex; gap: 10px; padding-left: 4px; }
.layer-row .wide { gap: 6px; }
.block .body { padding-left: 2px; gap: 5px; }
.properties .body { padding-left: 2px; gap: 3px; }
.prop-tools { flex: 1; display: grid; grid-template-columns: 20px 1fr; grid-template-rows: repeat(3, 30px); align-items: center; column-gap: 4px; padding: 1px 1px 0 0; }
.wheel { width: 20px; height: 20px; border-radius: 50%; background: conic-gradient(#f6c33c, #f08a3c 60deg, #e5494d 100deg, #a257d8 150deg, #5566e8 200deg, #34b8c8 250deg, #4cc85a 310deg, #f6c33c); }
.big-swatch { width: 20px; height: 20px; margin: 0 12px 0 13px; border-color: #ccc; }
.rule { width: 80px; height: 1px; margin: 0 3px; background: #fff; }
.groups .body { padding-left: 1px; gap: 1px; }
.tile { width: 30px; height: 27px; align-self: center; }
.active { background: #3a5f88; border: 1px solid #7cb4e8; }
.utilities .body { padding-left: 7px; gap: 10px; }
.clipboard .body { padding-left: 5px; gap: 9px; }
.view .body { padding-left: 2px; }

/* drawing tabs */
.files { display: flex; align-items: flex-end; height: 33px; padding-left: 26px; }
.file { height: 26px; }
.start { width: 154px; padding-left: 13px; justify-content: flex-start; background: #2d343f; color: #c0c4cc; clip-path: polygon(0 100%, 6px 15%, 12px 0, 100% 0, 100% 100%); }
.current { gap: 14px; padding: 0 20px 0 15px; margin-left: -2px; background: #3b4453; color: #fff; clip-path: polygon(0 100%, 6px 15%, 12px 0, calc(100% - 16px) 0, calc(100% - 8px) 20%, 100% 100%); }
.add { width: 28px; margin-left: 6px; background: #2d343f; border-radius: 8px 12px 8px 12px; }

/* workspace */
.work { flex: 1; display: flex; border-top: 5px solid #3b4453; }
.palette { display: flex; flex-direction: column; align-items: center; margin: 7px 0 6px; background: #3b4354; }
.palette span { margin: auto; writing-mode: vertical-rl; transform: rotate(180deg); }
.left { width: 27px; margin-right: 2px; }
.right { width: 22px; margin-left: 5px; padding-left: 2px; }
.grip { width: 9px; height: 4px; margin-top: 3px; background: radial-gradient(#c9cfdb 1px, transparent 1px) 0 0 / 3px 2px; }
.canvas { position: relative; flex: 1; border-bottom: 1px solid #4b5462; overflow: hidden; }
.view-label { padding: 5px; color: #eee; font-size: 14px; }
.model { position: absolute; left: 591px; top: 206px; }
.watermark { position: absolute; left: 549px; top: 272px; margin: 0; display: flex; align-items: baseline; line-height: 88px; white-space: nowrap; color: #d6d8d9; text-shadow: 1px 2px 1px #2b2e31; }
.han { width: 240px; font: 300 80px/88px "Noto Serif CJK SC", "Noto Sans CJK SC", serif; }
.www, .host, .com { font-family: "Liberation Serif", serif; font-size: 72px; }
.www { width: 161px; font-size: 66px; }
.host { width: 240px; }
.ucs { position: absolute; left: 351px; bottom: 36px; }
.cube { position: absolute; right: 21px; top: 50px; }
.ucs-name { position: absolute; right: 50px; top: 215px; width: 82px; height: 21px; gap: 7px; border-radius: 5px; background: #9c9eaa; color: #50545f; font-size: 12px; border: 1px solid #7d808b; }
.ucs-name .caret { background: #c8cad2; }
.view-controls { position: absolute; right: 10px; top: 11px; display: flex; gap: 12px; }
.cross-h { position: absolute; left: 0; right: 0; top: 120px; height: 1px; background: #fff; }
.cross-v { position: absolute; top: 0; bottom: 0; right: 303px; width: 1px; background: #fff; }
.pick { position: absolute; right: 300px; top: 117px; width: 7px; height: 7px; border: 1px solid #fff; background: #212830; }
.history { position: absolute; left: 545px; bottom: 36px; display: grid; gap: 5px; font: 15px/20px "Liberation Mono", monospace; }
.history span { padding: 0 3px 0 2px; background: #5d6063; border-radius: 2px; color: #f2f2f2; }
.history span:nth-child(1) { background: #4a4d50; color: #b5b5b5; }
.history span:nth-child(2) { background: #55585b; color: #d5d5d5; }
.command { position: absolute; left: 468px; right: 468px; bottom: 0; height: 32px; display: flex; gap: 6px; }
.command-tools { display: flex; align-items: center; gap: 15px; width: 64px; padding-left: 5px; background: #2c3340; }
.command-tools .dots { width: 6px; height: 21px; margin-right: -8px; background: radial-gradient(#e6e6e6 1px, transparent 1px) 0 0 / 3px 3px; }
.command-line { flex: 1; display: flex; align-items: center; gap: 3px; padding: 0 5px; margin-left: 0; background: #fff; color: #222; border-radius: 2px; }
.command-line input { flex: 1; }

/* layouts and status bar */
.status { display: flex; justify-content: space-between; height: 36px; background: #212a35; }
.layouts { display: flex; align-items: flex-start; padding: 1px 0 0 10px; color: #bcc1ca; }
.layouts button { height: 22px; padding: 0 13px; background: #29313d; clip-path: polygon(0 0, 100% 0, calc(100% - 7px) 100%, 7px 100%); }
.layouts .on { padding: 0 16px 0 18px; background: #3b4453; color: #fff; font-weight: 700; }
.layouts .plus { width: 30px; padding: 0; margin-left: 3px; }
.modes { display: flex; gap: 3px; padding: 2px 0; height: 33px; }
.group { display: flex; background: #3a4353; }
.group button { width: 29px; }
.group .drop { width: 20px; }
.group .model-btn { width: 58px; }
.group .scale { width: 41px; gap: 5px; }
.group .perf { width: 36px; }
.group .on { background: #5d89bf; border: solid #3a4353; border-width: 0 1px; }

/* taskbar */
.taskbar { display: flex; height: 45px; background: #202020; color: #fff; }
.win { width: 60px; }
.find { display: flex; align-items: center; gap: 14px; width: 430px; padding-left: 14px; background: #323232; border: 1px solid #686868; border-bottom: 0; }
.find input { flex: 1; font-size: 18px; }
.find input::placeholder { color: #e6e6e6; opacity: 1; }
.task-divider { width: 2px; margin: 11px 14px 8px 7px; background: #4a4a4a; }
.apps-row { display: flex; margin-right: auto; }
.apps-row button { width: 62px; }
.apps-row .on { background: #494949; }
.tray { display: flex; align-items: center; }
.alert { margin-right: 50px; }
.weather { gap: 10px; font-size: 17px; }
.tray-icons { display: flex; align-items: center; gap: 11px; margin-left: 20px; }
.tray-icons svg:first-child { margin-right: 2px; }
.clock { display: grid; justify-items: center; margin: 0 23px 0 15px; line-height: 22px; padding-top: 2px; }
.notice { position: relative; margin-right: 27px; }
.badge { position: absolute; left: 8px; top: 8px; width: 21px; height: 21px; border: 1px solid #aaa; border-radius: 50%; background: #3a3a3a; font-size: 13px; line-height: 19px; }
```
